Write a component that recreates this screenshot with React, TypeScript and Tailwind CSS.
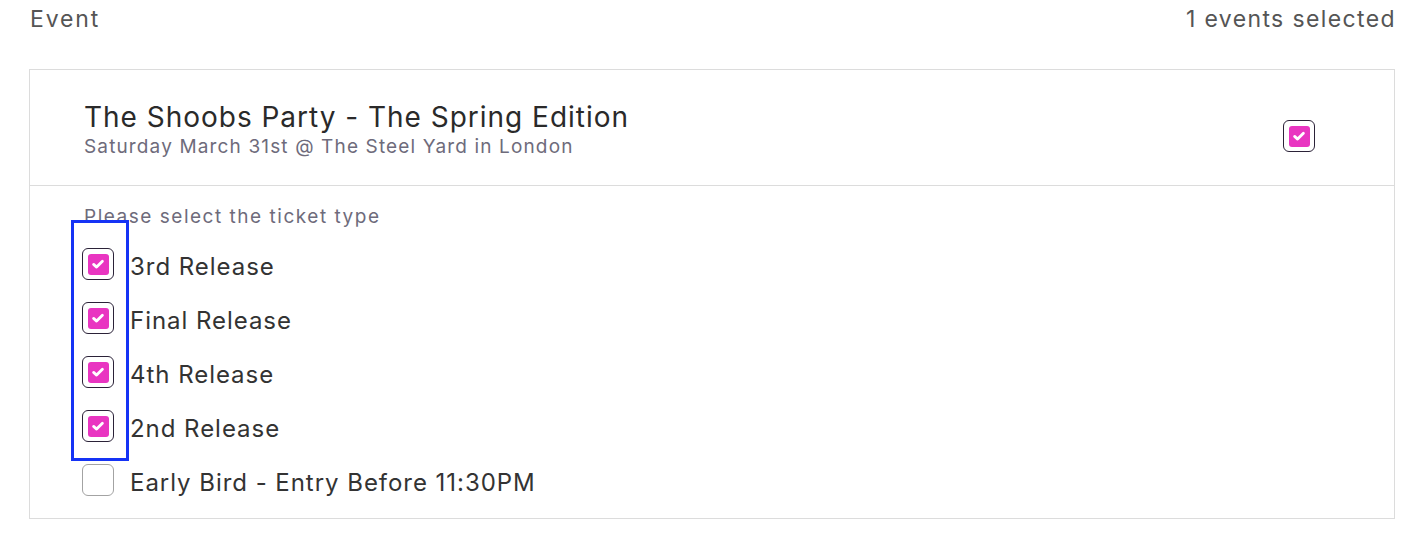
import { useState } from "react";

type Ticket = { id: string; name: string; checked: boolean };

const initialTickets: Ticket[] = [
  { id: "r3", name: "3rd Release", checked: true },
  { id: "final", name: "Final Release", checked: true },
  { id: "r4", name: "4th Release", checked: true },
  { id: "r2", name: "2nd Release", checked: true },
  { id: "early", name: "Early Bird - Entry Before 11:30PM", checked: false },
];

function Check({ checked, onClick }: { checked: boolean; onClick?: () => void }) {
  return (
    <button
      type="button"
      onClick={onClick}
      className={`flex h-[32px] w-[32px] shrink-0 items-center justify-center rounded-[6px] border bg-white ${
        checked ? "border-[#2b2238]" : "border-[#a3a3a3]"
      }`}
    >
      {checked && (
        <span className="flex h-[21px] w-[21px] items-center justify-center rounded-[3px] bg-[#e935c1]">
          <svg viewBox="0 0 16 16" className="h-[16px] w-[16px]" fill="none">
            <path
              d="M3.6 8.4 6.6 11.1 12.4 5.2"
              stroke="white"
              strokeWidth="2.8"
              strokeLinecap="round"
              strokeLinejoin="round"
            />
          </svg>
        </span>
      )}
    </button>
  );
}

export default function App() {
  const [tickets, setTickets] = useState(initialTickets);
  const [eventChecked, setEventChecked] = useState(true);

  const toggle = (id: string) =>
    setTickets((list) => list.map((t) => (t.id === id ? { ...t, checked: !t.checked } : t)));

  return (
    <div className="min-h-screen bg-white pl-[29px] pr-[23px] font-['Inter',sans-serif]">
      <header className="flex h-[38px] items-center justify-between text-[23px] tracking-[0.06em] text-[#555555]">
        <span className="pl-px tracking-[0.08em]">Event</span>
        <span className="-mr-[1px]">1 events selected</span>
      </header>

      <section className="mt-[31px] border border-[#dcdcdc]">
        <div className="flex items-start justify-between border-b border-[#dcdcdc] pb-[26px] pl-[54px] pr-[79px] pt-[30px]">
          <div>
            <h2 className="text-[28px] leading-[34px] tracking-[0.035em] text-[#2a2a2a]">
              The Shoobs Party - The Spring Edition
            </h2>
            <p className="mt-[1px] text-[19px] leading-[24px] tracking-[0.06em] text-[#6e6b7b]">
              Saturday March 31st @ The Steel Yard in London
            </p>
          </div>
          <div className="mt-[20px]">
            <Check checked={eventChecked} onClick={() => setEventChecked((v) => !v)} />
          </div>
        </div>

        <div className="relative pb-[11px] pl-[52px] pt-[19px]">
          <p className="pl-[2px] text-[19px] leading-[24px] tracking-[0.08em] text-[#6e6b7b]">
            Please select the ticket type
          </p>
          <ul className="mt-[8px]">
            {tickets.map((t) => (
              <li key={t.id} className="flex h-[54px] items-center gap-[16px]">
                <Check checked={t.checked} onClick={() => toggle(t.id)} />
                <span className="pt-[6px] text-[24px] tracking-[0.04em] text-[#333333]">{t.name}</span>
              </li>
            ))}
          </ul>
          <div className="pointer-events-none absolute left-[41px] top-[34px] h-[241px] w-[58px] border-[3px] border-[#1533f5]" />
        </div>
      </section>
    </div>
  );
}
